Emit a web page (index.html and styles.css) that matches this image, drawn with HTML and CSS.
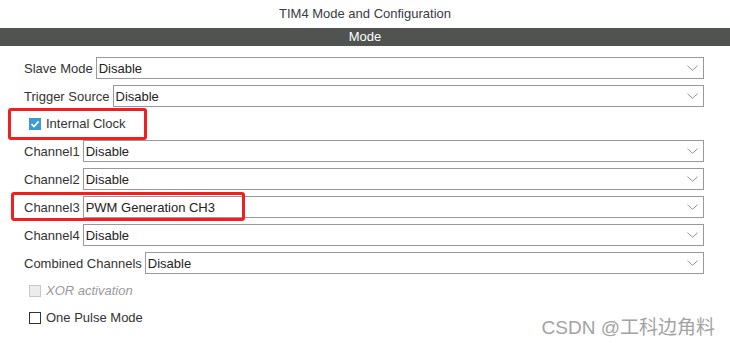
FILE: index.html
```html
<!DOCTYPE html>
<html lang="en">

<head>
    <meta charset="UTF-8">
    <meta name="viewport" content="width=device-width, initial-scale=1.0">
    <title>TIM4 Mode and Configuration</title>
    <link rel="stylesheet" href="styles.css">
</head>

<body>
    <div class="page">
        <div class="title">TIM4 Mode and Configuration</div>
        <div class="bar">Mode</div>

        <div class="form">
            <div class="row">
                <label>Slave Mode</label>
                <div class="select"><span>Disable</span><svg class="chev" viewBox="0 0 12 6"><path d="M0.5 0.5 L6 5.5 L11.5 0.5"/></svg></div>
            </div>
            <div class="row">
                <label>Trigger Source</label>
                <div class="select"><span>Disable</span><svg class="chev" viewBox="0 0 12 6"><path d="M0.5 0.5 L6 5.5 L11.5 0.5"/></svg></div>
            </div>
            <div class="row check-row">
                <span class="box checked"><svg viewBox="0 0 12 12"><path d="M2.5 6.2 L5 8.6 L9.6 3.4"/></svg></span>
                <span>Internal Clock</span>
            </div>
            <div class="row">
                <label>Channel1</label>
                <div class="select"><span>Disable</span><svg class="chev" viewBox="0 0 12 6"><path d="M0.5 0.5 L6 5.5 L11.5 0.5"/></svg></div>
            </div>
            <div class="row">
                <label>Channel2</label>
                <div class="select"><span>Disable</span><svg class="chev" viewBox="0 0 12 6"><path d="M0.5 0.5 L6 5.5 L11.5 0.5"/></svg></div>
            </div>
            <div class="row">
                <label>Channel3</label>
                <div class="select"><span>PWM Generation CH3</span><svg class="chev" viewBox="0 0 12 6"><path d="M0.5 0.5 L6 5.5 L11.5 0.5"/></svg></div>
            </div>
            <div class="row">
                <label>Channel4</label>
                <div class="select"><span>Disable</span><svg class="chev" viewBox="0 0 12 6"><path d="M0.5 0.5 L6 5.5 L11.5 0.5"/></svg></div>
            </div>
            <div class="row">
                <label>Combined Channels</label>
                <div class="select"><span>Disable</span><svg class="chev" viewBox="0 0 12 6"><path d="M0.5 0.5 L6 5.5 L11.5 0.5"/></svg></div>
            </div>
            <div class="row check-row disabled">
                <span class="box"></span>
                <span>XOR activation</span>
            </div>
            <div class="row check-row">
                <span class="box"></span>
                <span>One Pulse Mode</span>
            </div>
        </div>

        <!-- annotations drawn over the form -->
        <div class="mark mark-clock"></div>
        <div class="mark mark-ch3"></div>

        <div class="watermark">CSDN @工科边角料</div>
    </div>
</body>

</html>
```

FILE: styles.css
```css
body {
    margin: 0;
    background: #fff;
    font-family: "Liberation Sans", Arial, sans-serif;
    font-size: 13px;
    color: #333;
}

.page {
    position: relative;
    width: 730px;
    height: 343px;
    overflow: hidden;
}

.title {
    height: 28px;
    line-height: 27px;
    text-align: center;
    color: #3a3a44;
}

.bar {
    height: 18px;
    line-height: 18px;
    background: #515351;
    color: #fff;
    text-align: center;
}

.form {
    display: flex;
    flex-direction: column;
    gap: 6px;
    padding: 11px 26px 0 24px;
}

.row {
    display: flex;
    align-items: center;
    height: 22px;
}

.row label {
    margin-right: 3px;
    white-space: nowrap;
}

.select {
    flex: 1;
    height: 22px;
    box-sizing: border-box;
    border: 1px solid #999;
    display: flex;
    align-items: center;
    justify-content: space-between;
    padding: 0 5px 0 2px;
    color: #222;
}

.chev {
    width: 11px;
    height: 6px;
    fill: none;
    stroke: #888;
    stroke-width: 1;
}

.check-row {
    height: 21px;
    padding-left: 5px;
    gap: 5px;
}

.box {
    width: 12px;
    height: 12px;
    box-sizing: border-box;
    border: 1px solid #333;
    background: #fff;
    display: flex;
}

.box svg {
    width: 12px;
    height: 12px;
    fill: none;
    stroke: #fff;
    stroke-width: 1.6;
}

.box.checked {
    background: #3d9ad6;
    border: none;
}

.disabled {
    color: #9a9a9a;
    font-style: italic;
}

.disabled .box {
    border-color: #c8c8c8;
    background: #ececec;
}

.mark {
    position: absolute;
    border: 3px solid #f21f1f;
    border-radius: 3px;
    box-sizing: border-box;
}

.mark-clock {
    left: 8px;
    top: 108px;
    width: 139px;
    height: 32px;
}

.mark-ch3 {
    left: 11px;
    top: 192px;
    width: 234px;
    height: 29px;
}

.watermark {
    position: absolute;
    right: 15px;
    top: 312px;
    font-family: "Liberation Sans", "Noto Sans CJK SC", sans-serif;
    font-size: 19px;
    color: #a3a3a3;
}
```
